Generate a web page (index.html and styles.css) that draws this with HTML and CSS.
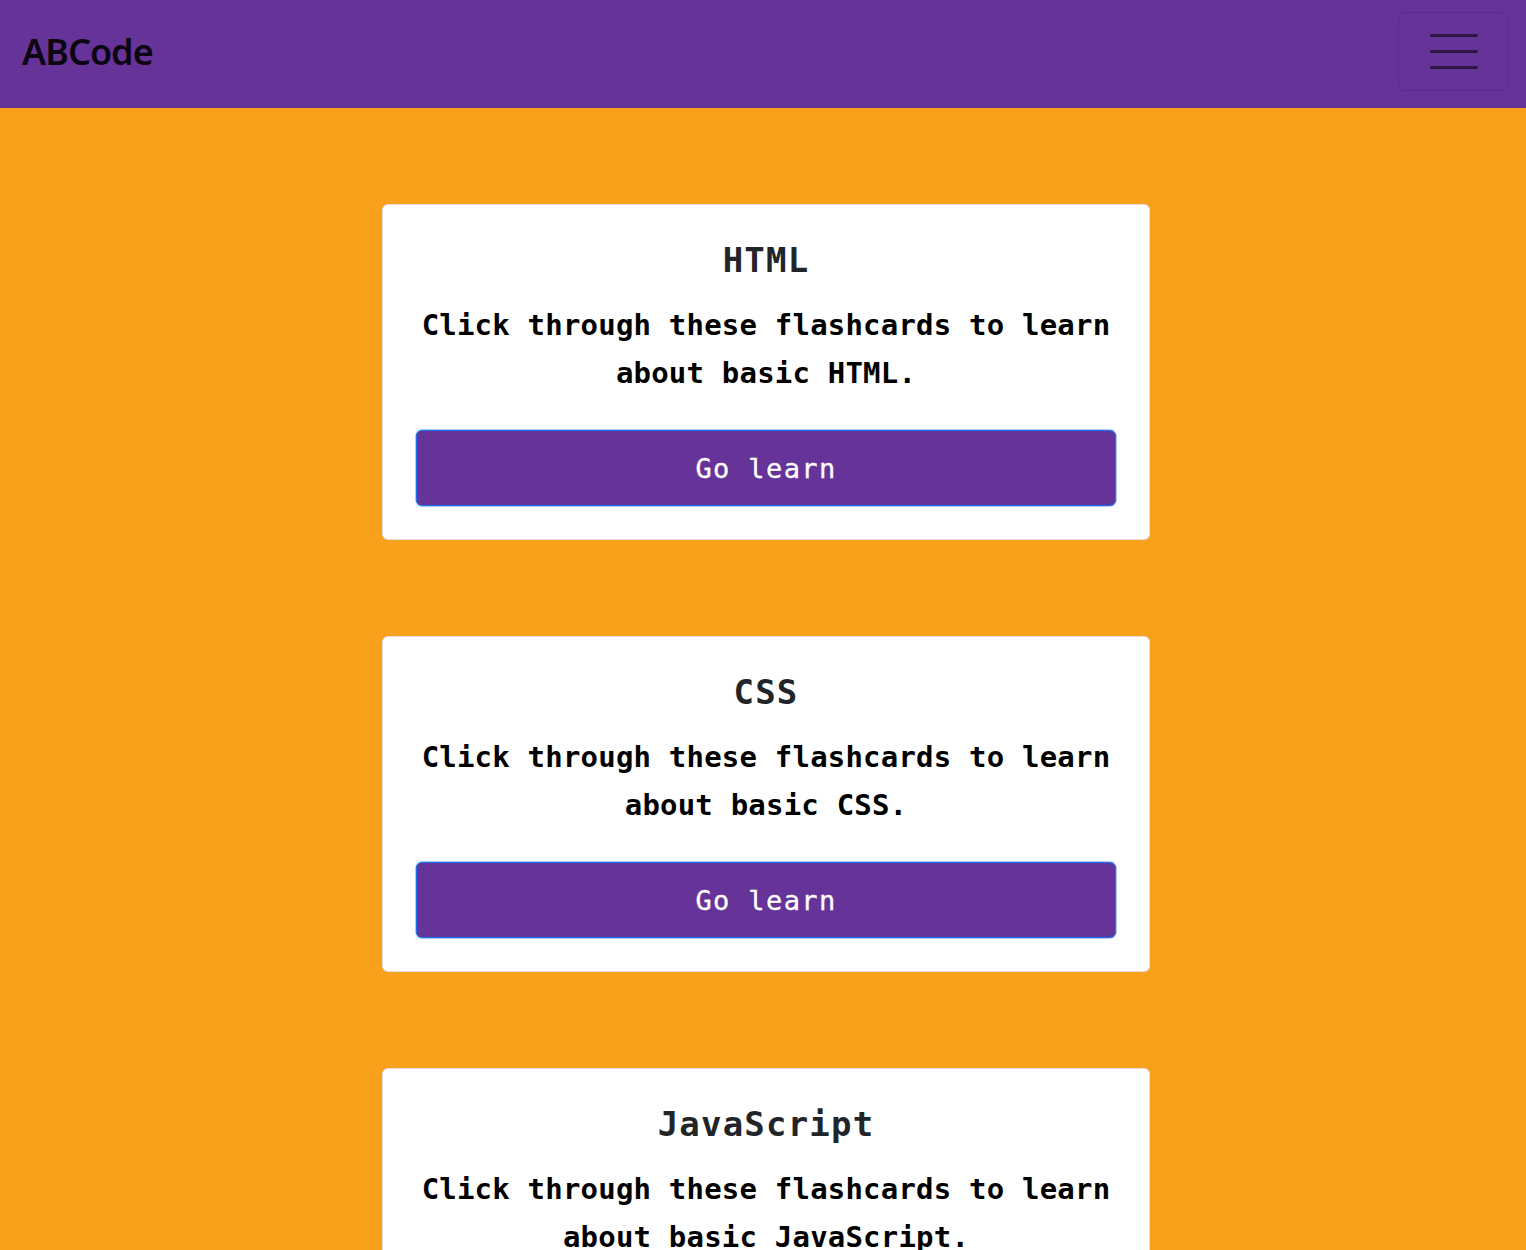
FILE: index.html
```html
<!DOCTYPE html>
<html lang="en">
<head>
<meta charset="utf-8">
<title>ABCode</title>
<link rel="stylesheet" href="styles.css">
</head>
<body>
<nav class="navbar">
  <a class="brand" href="#">ABCode</a>
  <button class="toggler" type="button" aria-label="Toggle navigation">
    <span class="bar"></span><span class="bar"></span><span class="bar"></span>
  </button>
</nav>
<main class="container">
  <section class="card">
    <h5 class="card-title">HTML</h5>
    <p class="card-text">Click through these flashcards to learn about basic HTML.</p>
    <a class="btn" href="#">Go learn</a>
  </section>
  <section class="card">
    <h5 class="card-title">CSS</h5>
    <p class="card-text">Click through these flashcards to learn about basic CSS.</p>
    <a class="btn" href="#">Go learn</a>
  </section>
  <section class="card">
    <h5 class="card-title">JavaScript</h5>
    <p class="card-text">Click through these flashcards to learn about basic JavaScript.</p>
    <a class="btn" href="#">Go learn</a>
  </section>
</main>
</body>
</html>
```
FILE: styles.css
```css
* { box-sizing: border-box; }
html, body { margin: 0; padding: 0; }
body {
  background: #f9a11b;
  font-family: "DejaVu Sans Mono", "Liberation Mono", monospace;
  color: #000;
}
.navbar {
  height: 108px;
  background: #663399;
  display: flex;
  align-items: center;
  justify-content: space-between;
  padding: 0 17px 5px 22px;
}
.brand {
  font-family: "Noto Sans", "Open Sans", sans-serif;
  font-size: 36px;
  font-weight: 600;
  letter-spacing: -1px;
  color: rgba(0, 0, 0, 0.9);
  text-decoration: none;
  line-height: 1;
}
.toggler {
  width: 111px;
  height: 79px;
  background: transparent;
  border: 1px solid rgba(0, 0, 0, 0.1);
  border-radius: 7px;
  display: flex;
  flex-direction: column;
  align-items: center;
  justify-content: center;
  gap: 13px;
  padding: 0;
}
.bar {
  display: block;
  width: 48px;
  height: 3px;
  border-radius: 2px;
  background: rgba(0, 0, 0, 0.55);
}
.container {
  display: flex;
  flex-direction: column;
  align-items: center;
  gap: 96px;
  padding: 96px 0 96px 6px;
}
.card {
  width: 768px;
  background: #fff;
  border: 1px solid rgba(0, 0, 0, 0.125);
  border-radius: 6px;
  padding: 33px;
  display: flex;
  flex-direction: column;
  text-align: center;
}
.card-title {
  margin: 0 0 19px;
  font-size: 34px;
  line-height: 44px;
  font-weight: 700;
  letter-spacing: 1.2px;
  color: #212529;
}
.card-text {
  margin: 0 0 33px;
  font-size: 29px;
  line-height: 48px;
  font-weight: 700;
  letter-spacing: 0.2px;
  color: #000;
}
.btn {
  display: flex;
  align-items: center;
  justify-content: center;
  height: 76px;
  background: #663399;
  border: 1px solid #1f6ff2;
  box-shadow: 0 0 0 0.5px #5a98f8;
  border-radius: 6px;
  color: #fff;
  text-decoration: none;
  font-size: 27px;
  letter-spacing: 1.4px;
  -webkit-text-stroke: 0.3px #fff;
}
```
